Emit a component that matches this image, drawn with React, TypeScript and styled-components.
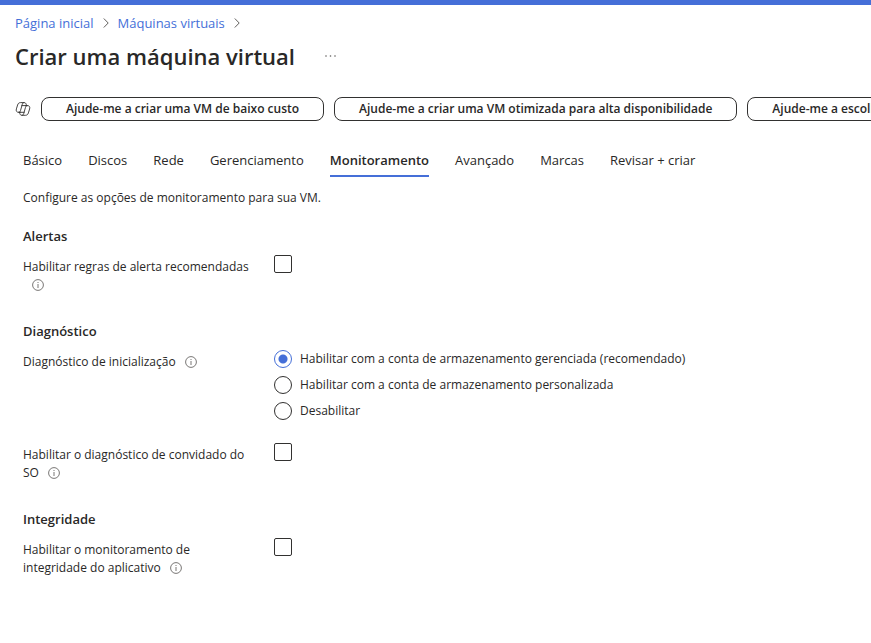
import React from "react";
import styled, { createGlobalStyle } from "styled-components";

const GlobalStyle = createGlobalStyle`
  *, *::before, *::after { box-sizing: border-box; }
  body {
    margin: 0;
    background: #ffffff;
    color: #292827;
    font-family: "Open Sans", "Noto Sans", sans-serif;
    font-size: 12px;
    line-height: 18px;
  }
  button, input { font: inherit; color: inherit; margin: 0; }
`;

const accent = "#456fd8";
const ink = "#323130";

const Page = styled.div`
  border-top: 5px solid ${accent};
  overflow: hidden;
`;

const Header = styled.header`
  padding: 9px 15px 0;
`;

const Breadcrumb = styled.ol`
  display: flex;
  align-items: center;
  gap: 9px;
  margin: 0;
  padding: 0;
  list-style: none;
  font-size: 13px;
`;

const Crumb = styled.li`
  display: flex;
  align-items: center;
  gap: 9px;
`;

const CrumbLink = styled.a`
  color: ${accent};
  text-decoration: none;
`;

const TitleRow = styled.div`
  display: flex;
  align-items: center;
  gap: 24px;
  margin-top: 8px;
`;

const Title = styled.h1`
  margin: 0;
  font-size: 22px;
  line-height: 32px;
  font-weight: 600;
`;

const MoreButton = styled.button`
  display: flex;
  padding: 4px;
  border: 0;
  background: none;
`;

const Suggestions = styled.div`
  display: flex;
  align-items: center;
  gap: 10px;
  margin-top: 25px;
  padding-left: 15px;
  overflow: hidden;

  svg { flex: none; }
`;

const SuggestionButton = styled.button`
  flex: none;
  height: 24px;
  padding: 0 24px;
  border: 1px solid ${ink};
  border-radius: 8px;
  background: #ffffff;
  font-weight: 600;
  line-height: 20px;
  white-space: nowrap;
`;

const Tabs = styled.div`
  display: flex;
  gap: 26px;
  margin-top: 30px;
  padding: 0 23px;
  font-size: 13px;
`;

const Tab = styled.button<{ $active: boolean }>`
  padding: 0 0 6px;
  border: 0;
  border-bottom: 2px solid ${(p) => (p.$active ? accent : "transparent")};
  background: none;
  font-weight: ${(p) => (p.$active ? 600 : 400)};
  white-space: nowrap;
`;

const Form = styled.form`
  padding: 12px 23px 48px;
`;

const Intro = styled.p`
  margin: 0;
`;

const Section = styled.section<{ $gap: number }>`
  margin-top: ${(p) => p.$gap}px;
`;

const SectionTitle = styled.h2`
  margin: 0 0 10px;
  font-size: 13px;
  line-height: 18px;
  font-weight: 600;
`;

const Field = styled.div`
  display: grid;
  grid-template-columns: 230px 1fr;
  column-gap: 21px;
  align-items: start;

  & + & { margin-top: 23px; }
`;

const FieldLabel = styled.div`
  padding-top: 3px;
`;

const InfoButton = styled.button`
  display: inline-flex;
  margin-left: 9px;
  padding: 0;
  border: 0;
  background: none;
  vertical-align: -2px;
`;

const CheckBox = styled.input`
  appearance: none;
  display: block;
  width: 18px;
  height: 18px;
  border: 1px solid ${ink};
  border-radius: 2px;

  &:checked { background: ${accent}; }
`;

const RadioGroup = styled.div`
  display: grid;
  gap: 8px;
`;

const RadioLabel = styled.label`
  display: flex;
  align-items: center;
  gap: 8px;
`;

const Radio = styled.input`
  appearance: none;
  flex: none;
  width: 18px;
  height: 18px;
  border: 1px solid ${ink};
  border-radius: 50%;

  &:checked {
    border-color: ${accent};
    background: radial-gradient(circle, ${accent} 4px, transparent 5px);
  }
`;

const Chevron = () => (
  <svg width="6" height="10" viewBox="0 0 6 10" fill="none" stroke="#605e5c" aria-hidden="true">
    <path d="M0.8 0.5 5.2 5 0.8 9.5" />
  </svg>
);

const CopilotIcon = () => (
  <svg
    width="16"
    height="16"
    viewBox="0 0 16 16"
    fill="none"
    stroke="#323130"
    strokeWidth="0.9"
    strokeLinecap="round"
    strokeLinejoin="round"
    aria-hidden="true"
  >
    <path d="M5.2 11.3H3.6C1.5 11.3.8 9.8 1.4 7.9L2.6 4C3.1 2.4 4 1.6 5.6 1.6H9C10.3 1.6 10.9 2.3 11.2 3.3L11.6 4.6" />
    <path d="M10.8 4.6H12.4C14.5 4.6 15.2 6.1 14.6 8L13.4 11.9C12.9 13.5 12 14.3 10.4 14.3H7C5.7 14.3 5.1 13.6 4.8 12.6L4.4 11.3" />
    <path d="M9 1.6C8.1 1.6 7.6 2.2 7.3 3.2L5.5 9.6C5.2 10.7 4.6 11.3 3.6 11.3" />
    <path d="M7 14.3C7.9 14.3 8.4 13.7 8.7 12.7L10.5 6.3C10.8 5.2 11.4 4.6 12.4 4.6" />
    <path d="M6.9 4.6H10.8M5.2 11.3H9.1" />
  </svg>
);

const InfoIcon = () => (
  <svg width="12" height="12" viewBox="0 0 12 12" fill="none" stroke="#797775" aria-hidden="true">
    <circle cx="6" cy="6" r="5.4" />
    <path d="M6 5v4M6 3v1" />
  </svg>
);

const Info = () => (
  <InfoButton type="button" aria-label="Mais informações">
    <InfoIcon />
  </InfoButton>
);

const tabs = ["Básico", "Discos", "Rede", "Gerenciamento", "Monitoramento", "Avançado", "Marcas", "Revisar + criar"];
const suggestions = [
  "Ajude-me a criar uma VM de baixo custo",
  "Ajude-me a criar uma VM otimizada para alta disponibilidade",
  "Ajude-me a escolher",
];
const bootOptions = [
  "Habilitar com a conta de armazenamento gerenciada (recomendado)",
  "Habilitar com a conta de armazenamento personalizada",
  "Desabilitar",
];

const CheckField = ({ id, label }: { id: string; label: string }) => (
  <Field>
    <FieldLabel>
      <label htmlFor={id}>{label}</label>
      <Info />
    </FieldLabel>
    <CheckBox type="checkbox" id={id} />
  </Field>
);

export default function App() {
  const [active, setActive] = React.useState("Monitoramento");
  return (
    <Page>
      <GlobalStyle />
      <Header>
        <nav aria-label="Trilha">
          <Breadcrumb>
            {["Página inicial", "Máquinas virtuais"].map((item) => (
              <Crumb key={item}>
                <CrumbLink href="#">{item}</CrumbLink>
                <Chevron />
              </Crumb>
            ))}
          </Breadcrumb>
        </nav>
        <TitleRow>
          <Title>Criar uma máquina virtual</Title>
          <MoreButton type="button" aria-label="Mais opções">
            <svg width="14" height="4" viewBox="0 0 14 4" fill="#605e5c" aria-hidden="true">
              <circle cx="3" cy="2" r="0.8" />
              <circle cx="7.5" cy="2" r="0.8" />
              <circle cx="12" cy="2" r="0.8" />
            </svg>
          </MoreButton>
        </TitleRow>
      </Header>
      <Suggestions>
        <CopilotIcon />
        {suggestions.map((text) => (
          <SuggestionButton type="button" key={text}>
            {text}
          </SuggestionButton>
        ))}
      </Suggestions>
      <Tabs role="tablist">
        {tabs.map((tab) => (
          <Tab
            type="button"
            role="tab"
            key={tab}
            aria-selected={tab === active}
            $active={tab === active}
            onClick={() => setActive(tab)}
          >
            {tab}
          </Tab>
        ))}
      </Tabs>
      <Form>
        <Intro>Configure as opções de monitoramento para sua VM.</Intro>
        <Section $gap={20}>
          <SectionTitle>Alertas</SectionTitle>
          <CheckField id="alert-rules" label="Habilitar regras de alerta recomendadas" />
        </Section>
        <Section $gap={28}>
          <SectionTitle>Diagnóstico</SectionTitle>
          <Field>
            <FieldLabel>
              <span id="boot-label">Diagnóstico de inicialização</span>
              <Info />
            </FieldLabel>
            <RadioGroup role="radiogroup" aria-labelledby="boot-label">
              {bootOptions.map((option, i) => (
                <RadioLabel key={option}>
                  <Radio type="radio" name="boot" defaultChecked={i === 0} />
                  {option}
                </RadioLabel>
              ))}
            </RadioGroup>
          </Field>
          <CheckField id="guest-diagnostics" label="Habilitar o diagnóstico de convidado do SO" />
        </Section>
        <Section $gap={28}>
          <SectionTitle>Integridade</SectionTitle>
          <CheckField id="app-health" label="Habilitar o monitoramento de integridade do aplicativo" />
        </Section>
      </Form>
    </Page>
  );
}
